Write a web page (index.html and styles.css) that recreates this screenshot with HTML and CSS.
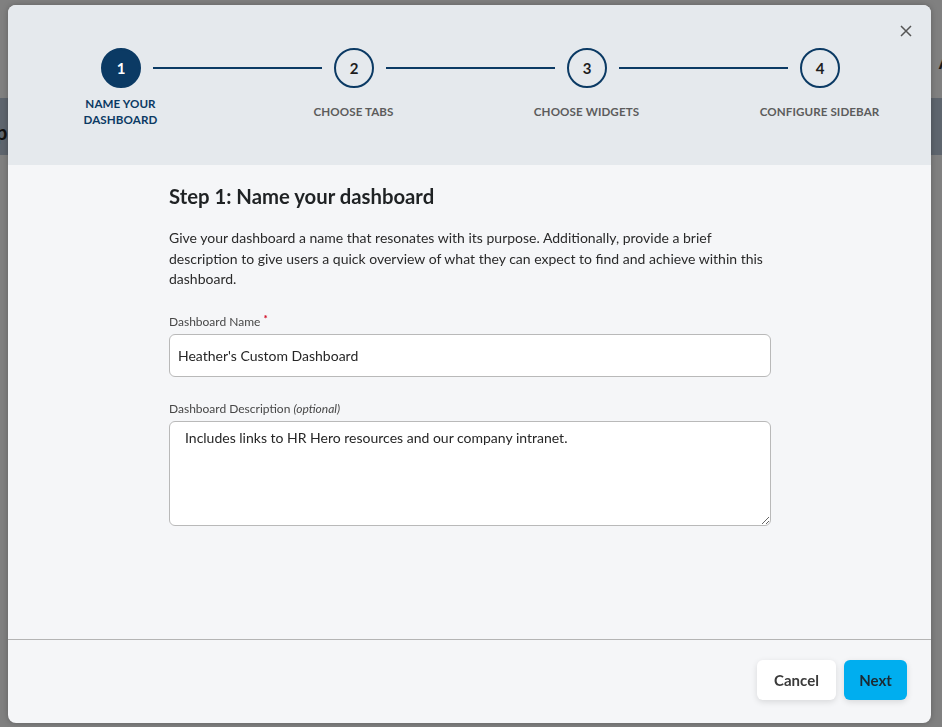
FILE: index.html
```html
<!DOCTYPE html>
<html lang="en">
<head>
<meta charset="utf-8">
<title>Create dashboard</title>
<link rel="stylesheet" href="styles.css">
</head>
<body>
<div class="page">
  <div class="page-top"><span class="page-letter">A</span></div>
  <div class="page-bar"><span class="page-bar-text">p</span></div>
</div>

<div class="modal" role="dialog" aria-label="Create dashboard">
  <header class="modal-header">
    <button class="close" aria-label="Close">
      <svg width="12" height="12" viewBox="0 0 12 12"><path d="M1 1 L11 11 M11 1 L1 11" stroke="#555" stroke-width="1.5" fill="none"/></svg>
    </button>
    <div class="steps-row">
      <span class="circle active">1</span>
      <span class="line"></span>
      <span class="circle">2</span>
      <span class="line"></span>
      <span class="circle">3</span>
      <span class="line"></span>
      <span class="circle">4</span>
    </div>
    <div class="labels-row">
      <span class="step-label active">Name your<br>dashboard</span>
      <span class="step-label">Choose tabs</span>
      <span class="step-label">Choose widgets</span>
      <span class="step-label">Configure sidebar</span>
    </div>
  </header>

  <main class="modal-body">
    <div class="content">
      <h2 class="title">Step 1: Name your dashboard</h2>
      <p class="intro">Give your dashboard a name that resonates with its purpose. Additionally, provide a brief description to give users a quick overview of what they can expect to find and achieve within this dashboard.</p>
      <label class="field-label" for="dname">Dashboard Name <span class="req">*</span></label>
      <input id="dname" class="input" type="text" value="Heather's Custom Dashboard">
      <label class="field-label second" for="ddesc">Dashboard Description <em>(optional)</em></label>
      <textarea id="ddesc" class="textarea">Includes links to HR Hero resources and our company intranet.</textarea>
    </div>
  </main>

  <footer class="modal-footer">
    <button class="btn btn-cancel">Cancel</button>
    <button class="btn btn-next">Next</button>
  </footer>
</div>
</body>
</html>
```

FILE: styles.css
```css
* { box-sizing: border-box; }

html, body {
  margin: 0;
  padding: 0;
  height: 100%;
}

body {
  background: #808080;
  font-family: Lato, "Open Sans", Arial, sans-serif;
  overflow: hidden;
}

.page-top {
  height: 98px;
  display: flex;
  justify-content: flex-end;
  align-items: flex-start;
  padding-top: 50px;
}

.page-letter {
  font-size: 19px;
  font-weight: 700;
  color: #1a1a1a;
  margin-right: -10px;
}

.page-bar {
  height: 57px;
  background: #5e656e;
  display: flex;
  align-items: center;
  padding-top: 10px;
}

.page-bar-text {
  font-size: 20px;
  font-weight: 700;
  color: #111;
  margin-left: -4px;
}

.modal {
  position: fixed;
  left: 8px;
  top: 5px;
  width: 923px;
  height: 718px;
  border-radius: 8px;
  overflow: hidden;
  background: #f5f6f8;
  display: flex;
  flex-direction: column;
  box-shadow: 0 0 6px rgba(0,0,0,0.25);
}

.modal-header {
  position: relative;
  height: 160px;
  flex: none;
  background: #e5e9ed;
  padding-top: 43px;
}

.close {
  position: absolute;
  top: 19px;
  right: 18px;
  width: 14px;
  height: 14px;
  padding: 0;
  border: 0;
  background: none;
  display: flex;
  align-items: center;
  justify-content: center;
  cursor: pointer;
}

.steps-row {
  display: flex;
  align-items: center;
  padding-left: 93px;
}

.circle {
  width: 40px;
  height: 40px;
  flex: none;
  border-radius: 50%;
  border: 2px solid #0b3a64;
  display: flex;
  align-items: center;
  justify-content: center;
  font-size: 15px;
  font-weight: 700;
  color: #1e1e1e;
}

.circle.active {
  background: #0b3a64;
  color: #fff;
}

.line {
  width: 169px;
  height: 2px;
  margin: 0 12px;
  background: #0b3a64;
  flex: none;
}

.labels-row {
  display: grid;
  grid-template-columns: repeat(4, 233px);
  align-items: center;
  margin-left: -4px;
  margin-top: 8px;
}

.step-label {
  text-align: center;
  text-transform: uppercase;
  font-size: 11.6px;
  line-height: 16px;
  font-weight: 700;
  color: #5c5c5c;
  letter-spacing: 0.1px;
}

.step-label.active {
  color: #0b3a64;
}

.modal-body {
  flex: 1;
  padding-top: 19px;
}

.content {
  width: 602px;
  margin-left: 161px;
  display: flex;
  flex-direction: column;
}

.title {
  margin: 0;
  font-size: 20.3px;
  line-height: 24px;
  font-weight: 700;
  color: #1f2224;
}

.intro {
  margin: 20px 0 0;
  font-size: 14px;
  line-height: 20.5px;
  color: #2a2a2a;
}

.field-label {
  margin-top: 24px;
  font-size: 12px;
  line-height: 16px;
  color: #474747;
}

.field-label.second {
  margin-top: 24px;
}

.field-label em {
  font-style: italic;
}

.req {
  color: #d0021b;
  font-weight: 700;
  position: relative;
  top: -4px;
  font-size: 10px;
}

.input {
  margin-top: 4px;
  height: 43px;
  width: 100%;
  border: 1px solid #b9b9b9;
  border-radius: 6px;
  background: #fff;
  padding: 0 8px;
  font-family: inherit;
  font-size: 14px;
  color: #262626;
}

.textarea {
  margin-top: 4px;
  height: 105px;
  width: 100%;
  border: 1px solid #b9b9b9;
  border-radius: 6px;
  background: #fff;
  padding: 6px 15px;
  font-family: inherit;
  font-size: 14px;
  line-height: 20px;
  color: #262626;
  resize: vertical;
}

.modal-footer {
  flex: none;
  height: 84px;
  border-top: 1px solid #b4b4b4;
  display: flex;
  justify-content: flex-end;
  align-items: flex-start;
  gap: 8px;
  padding: 20px 24px 0 0;
}

.btn {
  height: 40px;
  border: 0;
  border-radius: 6px;
  font-family: inherit;
  font-size: 15px;
  font-weight: 700;
  cursor: pointer;
  box-shadow: 0 2px 6px rgba(0,0,0,0.12);
}

.btn-cancel {
  width: 79px;
  background: #fff;
  color: #3a3a3a;
}

.btn-next {
  width: 63px;
  background: #00aeef;
  color: #1b2a33;
}
```
